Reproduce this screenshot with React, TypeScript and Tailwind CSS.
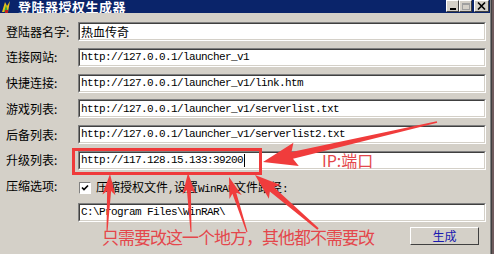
import React from "react"

type Pt = [number, number]

// spear-shaped annotation arrow: thin tail, widening shaft, swept-back head
function arrowPoints(tail: Pt, tip: Pt, w0: number, w1: number, L: number, W: number) {
  const dx = tip[0] - tail[0]
  const dy = tip[1] - tail[1]
  const len = Math.hypot(dx, dy)
  const ux = dx / len
  const uy = dy / len
  const nx = -uy
  const ny = ux
  const bx = tip[0] - ux * L
  const by = tip[1] - uy * L
  const p = (x: number, y: number) => `${x.toFixed(1)},${y.toFixed(1)}`
  return [
    p(tail[0] + (nx * w0) / 2, tail[1] + (ny * w0) / 2),
    p(bx + (nx * w1) / 2, by + (ny * w1) / 2),
    p(bx - ux * 4 + (nx * W) / 2, by - uy * 4 + (ny * W) / 2),
    p(tip[0], tip[1]),
    p(bx - ux * 4 - (nx * W) / 2, by - uy * 4 - (ny * W) / 2),
    p(bx - (nx * w1) / 2, by - (ny * w1) / 2),
    p(tail[0] - (nx * w0) / 2, tail[1] - (ny * w0) / 2),
  ].join(" ")
}

const arrows = [
  arrowPoints([437, 122], [263, 162], 1.5, 7, 30, 24),
  arrowPoints([107, 232], [110, 174], 1, 4, 17, 13),
  arrowPoints([191, 232], [188, 173], 1, 4, 17, 13),
  arrowPoints([247, 232], [229, 177], 1, 4, 17, 13),
  arrowPoints([318, 229], [255, 175], 2, 6, 22, 18),
]

const rows = [
  { label: "登陆器名字:", value: "热血传奇", cjk: true },
  { label: "连接网站:", value: "http://127.0.0.1/launcher_v1" },
  { label: "快捷连接:", value: "http://127.0.0.1/launcher_v1/link.htm" },
  { label: "游戏列表:", value: "http://127.0.0.1/launcher_v1/serverlist.txt" },
  { label: "后备列表:", value: "http://127.0.0.1/launcher_v1/serverlist2.txt" },
  { label: "升级列表:", value: "http://117.128.15.133:39200", caret: true },
]

const cjk = "font-['Noto_Sans_CJK_SC',sans-serif]"
const mono = "font-['Liberation_Mono',monospace] text-[11px] tracking-[-0.6px]"

function Field({ children }: { children: React.ReactNode }) {
  return (
    <div className="h-[19px] flex-1 border-t border-l border-t-[#808080] border-l-[#808080] border-b border-r border-b-white border-r-white">
      <div className="h-full bg-white border-t border-l border-t-[#404040] border-l-[#404040] border-b border-r border-b-[#d4d0c8] border-r-[#d4d0c8] flex items-center pl-[1px] text-black">
        {children}
      </div>
    </div>
  )
}

function TitleButton({ children, wide }: { children: React.ReactNode; wide?: boolean }) {
  return (
    <div
      className={`${wide ? "w-[15px]" : "w-[13px]"} h-[12px] bg-[#d4d0c8] border-t border-l border-t-white border-l-white border-b border-r border-b-[#404040] border-r-[#404040] flex items-center justify-center`}
    >
      {children}
    </div>
  )
}

export default function App() {
  return (
    <div className={`relative w-[494px] h-[254px] overflow-hidden bg-[#d4d0c8] flex ${cjk}`}>
      <div className="w-[490px] flex flex-col">
        {/* title bar */}
        <div className="h-[13px] bg-[#0a246a] flex items-end overflow-hidden">
          <svg width="10" height="13" viewBox="0 0 10 13" className="ml-[1px] shrink-0">
            <path d="M1 12 L4 2 L6 6 L9 1 L7 12 Z" fill="#e8c21a" />
            <path d="M3 12 L5 5 L7 12 Z" fill="#3aa83a" />
            <rect x="4" y="10" width="3" height="3" fill="#c02020" />
          </svg>
          <span className="ml-[7px] -mb-[1px] text-white font-bold text-[13px] leading-[15px] tracking-[0.5px]">
            登陆器授权生成器
          </span>
          <div className="ml-auto flex items-end mr-[1px] mb-[1px]">
            <TitleButton>
              <div className="w-[6px] h-[2px] bg-black mt-[5px]" />
            </TitleButton>
            <TitleButton>
              <div className="w-[8px] h-[7px] border border-[#a0a0a0] border-t-2" />
            </TitleButton>
            <div className="w-[2px]" />
            <TitleButton wide>
              <svg width="9" height="8" viewBox="0 0 9 8">
                <path d="M1 0.5 L8 7.5 M8 0.5 L1 7.5" stroke="black" strokeWidth="1.6" />
              </svg>
            </TitleButton>
          </div>
        </div>

        {/* form */}
        <div className="flex flex-col gap-[6.8px] pt-[9px] pl-[6px] pr-[4px] text-[12px] text-black">
          {rows.map((r) => (
            <div key={r.label} className="flex items-center">
              <div className="w-[72px] leading-none">{r.label}</div>
              <Field>
                <span className={r.cjk ? "text-[12px] leading-none" : mono}>{r.value}</span>
                {r.caret && <span className="w-[1px] h-[13px] bg-black ml-[1px]" />}
              </Field>
            </div>
          ))}

          <div className="flex items-center h-[19px]">
            <div className="w-[72px] leading-none">压缩选项:</div>
            <div className="flex items-center translate-y-[2px]">
              <div className="ml-[1px] w-[12px] h-[12px] bg-white border-t border-l border-t-[#808080] border-l-[#808080] border-b border-r border-b-white border-r-white flex items-center justify-center">
                <svg width="8" height="8" viewBox="0 0 8 8">
                  <path d="M1 3.5 L3 5.5 L7 1.5" stroke="black" strokeWidth="1.7" fill="none" />
                </svg>
              </div>
              <span className="ml-[5px] leading-none">
                压缩授权文件<span className={mono}>,</span>设置<span className={mono}>WinRAR</span>文件路径<span className={mono}>:</span>
              </span>
            </div>
          </div>

          <div className="flex items-center">
            <div className="w-[72px]" />
            <Field>
              <span className={mono}>C:\Program Files\WinRAR\</span>
            </Field>
          </div>

          <div className="flex justify-end -mt-[1px] pr-[7px]">
            <button className="w-[69px] h-[18px] bg-[#d4d0c8] border-t border-l border-t-white border-l-white border-b border-r border-b-[#404040] border-r-[#404040] flex items-center justify-center text-[#1a1ab0] text-[12px] leading-none">
              生成
            </button>
          </div>
        </div>
      </div>

      {/* window edge */}
      <div className="w-[4px] flex">
        <div className="w-[1px] bg-[#808080]" />
        <div className="w-[1px] bg-[#404040]" />
        <div className="flex-1 bg-[#6e5a5c]" />
      </div>

      {/* red annotations */}
      <div className="absolute left-[72px] top-[148px] w-[190px] h-[27px] border-[3px] border-[#ef3a3a]" />
      <svg className="absolute inset-0 pointer-events-none" width="494" height="254">
        {arrows.map((pts, i) => (
          <polygon key={i} points={pts} fill="#f03c3c" />
        ))}
      </svg>
      <div className="absolute left-[322px] top-[152px] text-[16px] leading-none text-[#e4474c]">IP:端口</div>
      <div className="absolute left-[102px] top-[228px] text-[17px] leading-none tracking-[-1px] text-[#e4474c]">
        只需要改这一个地方，其他都不需要改
      </div>
    </div>
  )
}
